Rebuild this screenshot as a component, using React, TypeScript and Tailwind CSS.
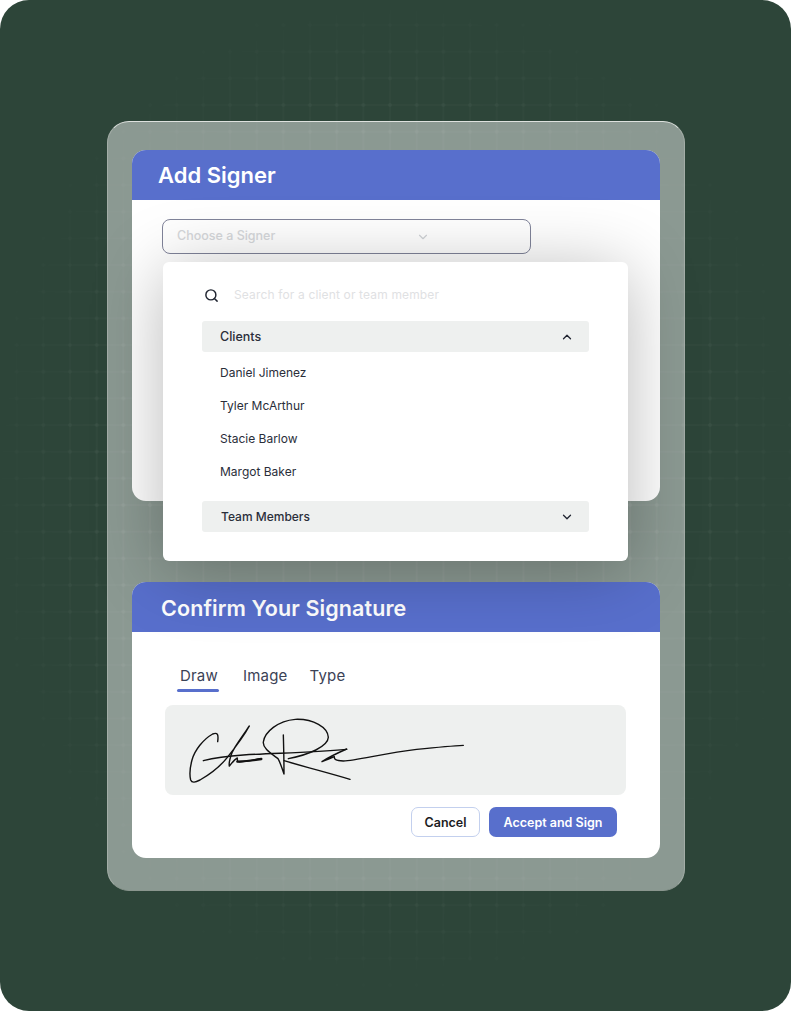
import { ChevronDown, ChevronUp, Search } from "lucide-react"

const clients = ["Daniel Jimenez", "Tyler McArthur", "Stacie Barlow", "Margot Baker"]

// faint grid behind the panel, fades out towards the edges
function GridBackdrop() {
  return (
    <svg className="absolute inset-0 h-full w-full" viewBox="0 0 791 1011">
      <defs>
        <pattern id="cell" x="16.67" y="25" width="26.67" height="26.67" patternUnits="userSpaceOnUse">
          <path d="M0 0H26.67M0 0V26.67M0 26.67H26.67M26.67 0V26.67" stroke="#fff" strokeOpacity="0.07" strokeWidth="1" fill="none" />
          <circle cx="0" cy="0" r="2" fill="#fff" fillOpacity="0.05" />
          <circle cx="26.67" cy="0" r="2" fill="#fff" fillOpacity="0.05" />
          <circle cx="0" cy="26.67" r="2" fill="#fff" fillOpacity="0.05" />
          <circle cx="26.67" cy="26.67" r="2" fill="#fff" fillOpacity="0.05" />
        </pattern>
        <radialGradient id="fade" cx="395" cy="490" r="1" gradientUnits="userSpaceOnUse" gradientTransform="translate(395 490) scale(425 515) translate(-395 -490)">
          <stop offset="0.55" stopColor="#fff" />
          <stop offset="1" stopColor="#fff" stopOpacity="0" />
        </radialGradient>
        <mask id="fadeMask">
          <rect width="791" height="1011" fill="url(#fade)" />
        </mask>
      </defs>
      <rect width="791" height="1011" fill="url(#cell)" mask="url(#fadeMask)" />
    </svg>
  )
}

function Signature() {
  return (
    <svg viewBox="45 165 975 270" className="block h-[90px] w-[325px]" fill="none" stroke="#111" strokeWidth="4.2" strokeLinecap="round" strokeLinejoin="round">
      <path d="M203 275C206 254 203 246 188 252C160 268 134 300 126 330C120 352 119 378 122 390C126 400 136 397 150 390C178 374 210 350 232 322C256 292 282 258 298 228C280 256 256 286 246 308C240 324 236 338 238 348C246 338 254 328 262 324C262 332 262 336 268 336C282 336 300 332 334 326" />
      <path d="M262 335C280 334 310 331 334 327" strokeWidth="7" />
      <path d="M160 332C190 324 230 318 280 315C380 309 480 308 590 298" />
      <path d="M400 255C401 290 402 335 402 372C396 354 390 336 384 326C360 308 338 294 340 276C344 246 384 212 436 208C490 206 534 232 535 262C534 290 476 314 415 326" />
      <path d="M402 332C470 352 540 370 600 388" />
      <path d="M590 297C565 308 535 322 516 335C530 330 545 324 553 320C552 328 556 332 580 333C620 332 700 310 800 298C850 293 900 288 940 286" />
    </svg>
  )
}

export default function App() {
  return (
    <div className="relative h-[1011px] w-[791px] overflow-hidden rounded-[29px] bg-[#2d4539] pl-[107px] pt-[121px] font-['Inter',sans-serif]">
      <GridBackdrop />

      <div className="relative flex h-[770px] w-[578px] flex-col rounded-[22px] border border-[#a3ada7] border-b-[#8a968e] border-t-[#dde1de] bg-white/45 px-6 pt-[28px]">
        {/* Add Signer */}
        <div className="h-[351px] overflow-hidden rounded-[14px] bg-white">
          <h2 className="flex h-[50px] items-center bg-[#586fcc] pl-[26px] text-[22px] font-semibold text-white">Add Signer</h2>
          <div className="ml-[30px] mt-[19px] flex h-[35px] w-[369px] items-center rounded-[8px] border border-[#80849a] pl-[14px] text-[12.5px] font-medium text-[#d6d8db]">
            <span className="w-[239px]">Choose a Signer</span>
            <ChevronDown size={14} className="text-[#cfd2d6]" />
          </div>
        </div>

        {/* Confirm signature */}
        <div className="mt-[81px] h-[276px] overflow-hidden rounded-[14px] bg-white">
          <h2 className="flex h-[50px] items-center bg-[#586fcc] pl-[29px] pt-[3px] text-[21.5px] font-semibold tracking-[0.1px] text-white">Confirm Your Signature</h2>
          <div className="ml-[48px] mt-[33px] flex h-[26px] items-start gap-[25px] text-[15px] tracking-[0.2px] text-[#3b4256]">
            <span className="relative leading-[22px]">
              Draw
              <span className="absolute -left-[3px] -right-[1px] top-[24px] h-[3px] rounded-full bg-[#586fcc]"></span>
            </span>
            <span className="leading-[22px]">Image</span>
            <span className="-ml-[3px] leading-[22px]">Type</span>
          </div>
          <div className="ml-[33px] mt-[14px] h-[90px] w-[461px] rounded-[8px] bg-[#eef0ef]">
            <Signature />
          </div>
          <div className="ml-[279px] mt-[12px] flex gap-[9px] text-[12.5px] font-semibold">
            <button className="h-[30px] w-[69px] rounded-[7px] border border-[#c3d0ee] pt-[2px] text-[#1c1c1f]">Cancel</button>
            <button className="h-[30px] w-[128px] rounded-[7px] bg-[#586fcc] pt-[2px] text-white">Accept and Sign</button>
          </div>
        </div>

        {/* open dropdown sits over both cards */}
        <div className="absolute left-[55px] top-[140px] h-[299px] w-[465px] rounded-[6px] bg-white pl-[39px] pt-[14px] shadow-[0_8px_70px_rgba(0,0,0,0.28)]">
          <div className="mb-[7px] flex h-[38px] items-center text-[12px] tracking-[0.15px] text-[#dfe1e3]">
            <Search size={15} strokeWidth={2.3} className="ml-[2px] text-[#1f2430]" />
            <span className="ml-[15px]">Search for a client or team member</span>
          </div>
          <div className="flex h-[31px] w-[387px] items-center justify-between rounded-[3px] bg-[#eef0ef] pl-[18px] pr-[15px] text-[12.5px] font-medium text-[#2a2e3a]">
            <span className="mt-[2px]">Clients</span>
            <ChevronUp size={14} strokeWidth={2.2} className="text-[#1f2430]" />
          </div>
          <ul className="pt-[4px] text-[12px] text-[#2a2e3a]">
            {clients.map((name) => (
              <li key={name} className="flex h-[33px] items-center pl-[18px]">
                {name}
              </li>
            ))}
          </ul>
          <div className="mt-[13px] flex h-[31px] w-[387px] items-center justify-between rounded-[3px] bg-[#eef0ef] pl-[19px] pr-[15px] text-[12px] font-medium text-[#2a2e3a]">
            <span className="mt-[1px]">Team Members</span>
            <ChevronDown size={14} strokeWidth={2.2} className="text-[#1f2430]" />
          </div>
        </div>
      </div>
    </div>
  )
}
